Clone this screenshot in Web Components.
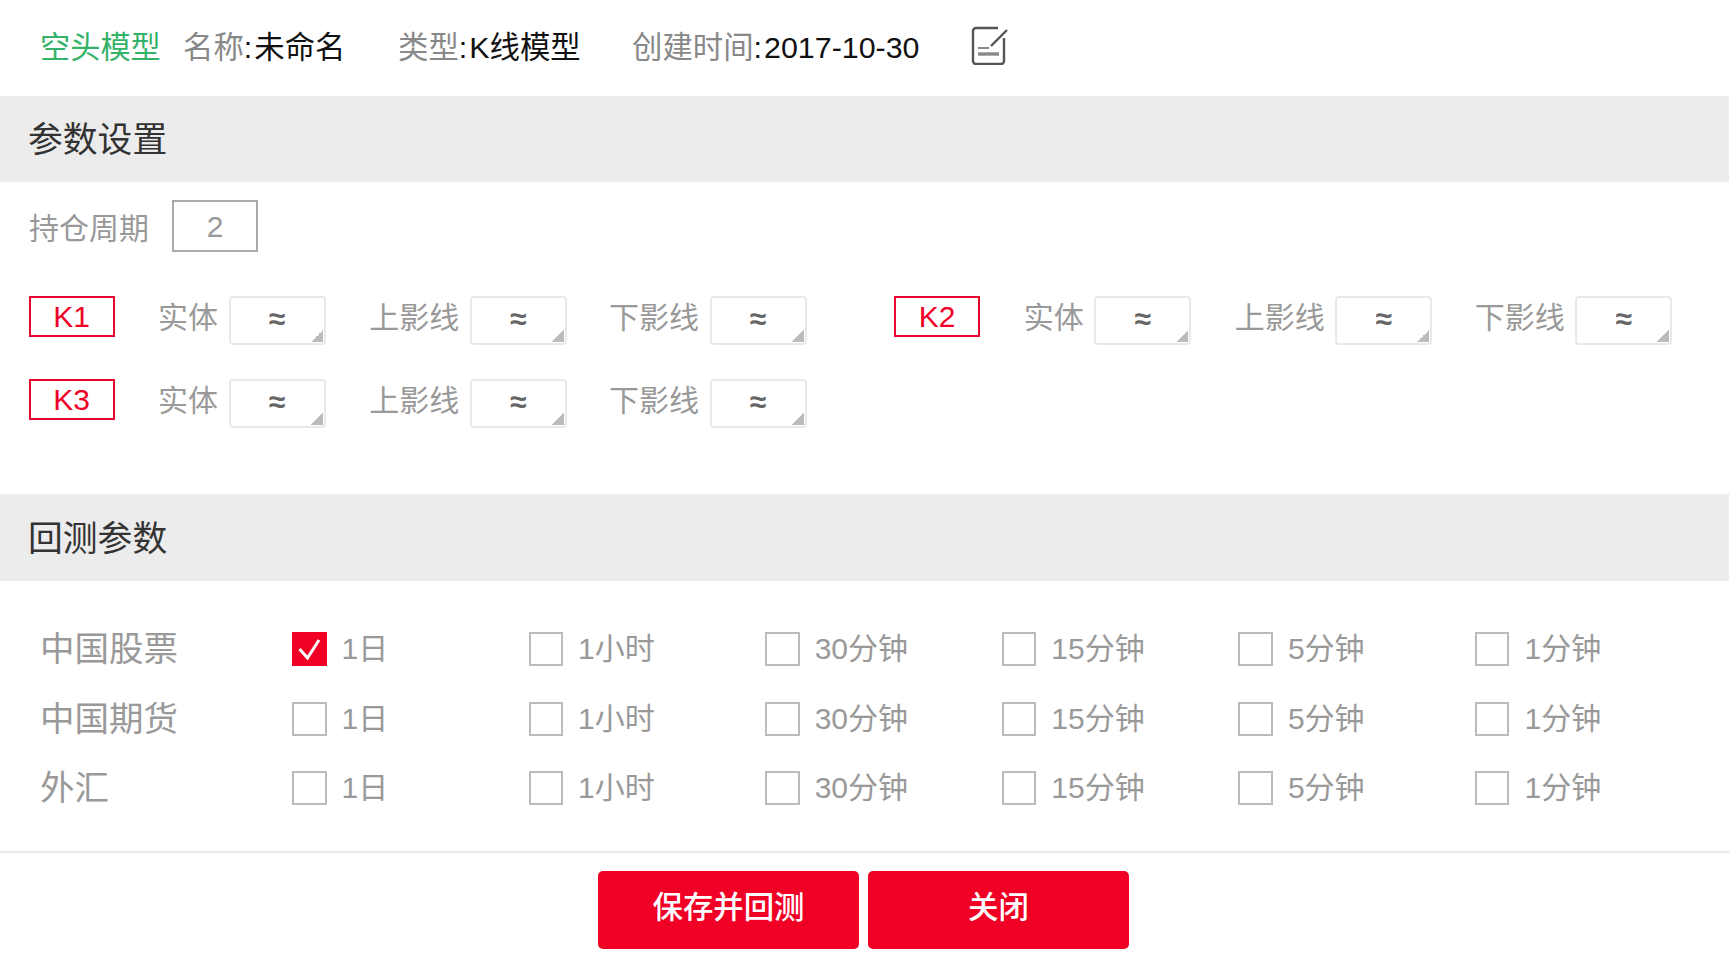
<!DOCTYPE html>
<html lang="zh">
<head>
<meta charset="utf-8">
<title>空头模型</title>
<style>
    html,body{
        margin:0;
        background:#fff;
        font-family:"Liberation Sans","Noto Sans CJK SC",sans-serif;
    }
</style>
</head>
<body>
<model-dialog>
    <model-header>
        <span slot="type">空头模型</span>
        <meta-item slot="meta" label="名称" style="width:215px">未命名</meta-item>
        <meta-item slot="meta" label="类型" style="width:234px">K线模型</meta-item>
        <meta-item slot="meta" label="创建时间" style="width:339px">2017-10-30</meta-item>
    </model-header>
    <section-bar>参数设置</section-bar>
    <hold-period value="2">持仓周期</hold-period>
    <pattern-grid>
        <k-pattern name="K1"></k-pattern>
        <k-pattern name="K2"></k-pattern>
        <k-pattern name="K3"></k-pattern>
    </pattern-grid>
    <section-bar style="height:87px">回测参数</section-bar>
    <backtest-table>
        <market-row market="中国股票" checked="1日"></market-row>
        <market-row market="中国期货"></market-row>
        <market-row market="外汇"></market-row>
    </backtest-table>
    <action-bar>
        <red-button style="width:261px">保存并回测</red-button>
        <red-button style="width:261px">关闭</red-button>
    </action-bar>
</model-dialog>

<script>
const periods = ['1日','1小时','30分钟','15分钟','5分钟','1分钟'];

function define(name, html, init){
    let template = document.createElement('template');
    template.innerHTML = html;
    customElements.define(name, class extends HTMLElement{
        constructor(){
            super();
            this.attachShadow({mode:'open'});
            this.shadowRoot.appendChild(template.content.cloneNode(true));
        }
        connectedCallback(){
            if(init) init(this, this.shadowRoot);
        }
    });
}

define('model-dialog', `
<style>
    :host{display:block;width:1729px;}
</style>
<slot></slot>`);

define('model-header', `
<style>
    :host{
        display:flex;
        align-items:center;
        height:96px;
        padding-left:40px;
        box-sizing:border-box;
        font-size:30px;
    }
    .type{color:#35b26a;width:143px;margin-top:-7px;font-size:30.2px;}
    svg{display:block;margin:-6px 0 0 0;}
</style>
<div class="type"><slot name="type"></slot></div>
<slot name="meta"></slot>
<svg width="38" height="40" viewBox="0 0 38 40" fill="none">
    <path d="M27 3H5a3 3 0 0 0-3 3v30a3 3 0 0 0 3 3h25a3 3 0 0 0 3-3V13" stroke="#555" stroke-width="2.4"/>
    <path d="M20 21L36 5" stroke="#555" stroke-width="2.4"/>
    <path d="M7 23H18" stroke="#888" stroke-width="2"/>
    <path d="M7 29H28" stroke="#888" stroke-width="3.4"/>
</svg>`);

define('meta-item', `
<style>
    :host{display:block;color:#111;white-space:nowrap;margin-top:-6px;font-size:30.4px;}
    span{color:#888;}
    i{font-style:normal;padding-right:2px;}
</style>
<span id="label"></span><i>:</i><slot></slot>`, (el, root)=>{
    root.querySelector('#label').textContent = el.getAttribute('label');
});

define('section-bar', `
<style>
    :host{
        display:flex;
        align-items:center;
        height:86px;
        padding:0 0 4px 28px;
        box-sizing:border-box;
        background:#ececec;
        color:#333;
        font-size:34.8px;
    }
</style>
<slot></slot>`);

define('hold-period', `
<style>
    :host{
        display:flex;
        align-items:center;
        gap:23px;
        padding:18px 0 0 29px;
        color:#999;
        font-size:30px;
    }
    div{
        width:86px;
        height:52px;
        box-sizing:border-box;
        border:2px solid #aaa;
        text-align:center;
        line-height:50px;
    }
</style>
<slot></slot><div id="value"></div>`, (el, root)=>{
    root.querySelector('#value').textContent = el.getAttribute('value');
});

define('pattern-grid', `
<style>
    :host{
        display:grid;
        grid-template-columns:865.6px 865.6px;
        row-gap:34px;
        padding:44px 0 66.4px 28.5px;
    }
</style>
<slot></slot>`);

define('k-pattern', `
<style>
    :host{display:flex;align-items:flex-start;gap:43.6px;font-size:30px;color:#999;}
    .name{
        width:86px;
        height:40.5px;
        box-sizing:border-box;
        border:2px solid #e8062e;
        color:#f00024;
        text-align:center;
        line-height:38px;
    }
    k-field:last-child{margin-left:-1.2px;}
</style>
<div class="name" id="name"></div>
<k-field>实体</k-field>
<k-field>上影线</k-field>
<k-field>下影线</k-field>`, (el, root)=>{
    root.querySelector('#name').textContent = el.getAttribute('name');
});

define('k-field', `
<style>
    :host{display:flex;align-items:flex-start;gap:10.5px;}
    .label{line-height:44px;height:44px;}
    .select{
        width:97px;
        height:49px;
        box-sizing:border-box;
        border:2px solid #e9e9e9;
        border-radius:4px;
        color:#666;
        font-weight:bold;
        text-align:center;
        line-height:41px;
        background:linear-gradient(135deg,transparent 50%,#bbb 50%) no-repeat right 1px bottom 1px/12px 12px;
    }
</style>
<div class="label"><slot></slot></div>
<div class="select">≈</div>`);

define('backtest-table', `
<style>
    :host{display:block;padding:33px 0 29.5px 40px;}
</style>
<slot></slot>`);

define('market-row', `
<style>
    :host{
        display:grid;
        grid-template-columns:252px repeat(6,236.6px);
        align-items:center;
        height:69.5px;
    }
    .market{color:#999;font-size:34.5px;margin-top:-6px;}
</style>
<div class="market" id="market"></div>`, (el, root)=>{
    root.querySelector('#market').textContent = el.getAttribute('market');
    periods.forEach(p=>{
        let option = document.createElement('time-option');
        option.textContent = p;
        if(el.getAttribute('checked') === p) option.setAttribute('checked','');
        root.appendChild(option);
    });
});

define('time-option', `
<style>
    :host{display:flex;align-items:center;gap:15px;color:#999;font-size:30px;}
    .box{
        width:34.5px;
        height:34px;
        box-sizing:border-box;
        border:2px solid #bbb;
        flex:none;
    }
    .text{margin-top:-6px;}
    :host([checked]) .box{background:#f00024;border-color:#f00024;}
    svg{display:none;margin:-2px;}
    :host([checked]) svg{display:block;}
</style>
<div class="box">
    <svg width="34.5" height="34" viewBox="0 0 34.5 34" fill="none"><path d="M7.5 17L15.5 26L27 8" stroke="#fff" stroke-width="3"/></svg>
</div>
<div class="text"><slot></slot></div>`);

define('action-bar', `
<style>
    :host{
        display:flex;
        justify-content:center;
        gap:9px;
        padding:18px 2px 13px 0;
        border-top:2px solid #e8e8e8;
        margin-top:-1px;
    }
</style>
<slot></slot>`);

define('red-button', `
<style>
    :host{
        display:flex;
        align-items:center;
        justify-content:center;
        height:78px;
        border-radius:5px;
        background:#f00024;
        color:#fff;
        font-size:30.4px;
        font-weight:500;
        padding-bottom:10px;
        box-sizing:border-box;
    }
</style>
<slot></slot>`);
</script>
</body>
</html>
